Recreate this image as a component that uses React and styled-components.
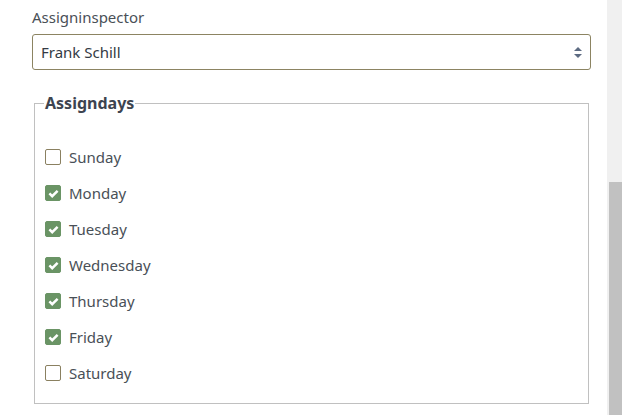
import React from "react";
import styled, { createGlobalStyle } from "styled-components";

const Global = createGlobalStyle`
  html, body { margin: 0; padding: 0; background: #fff; }
  body { font-family: "Noto Sans", "Open Sans", sans-serif; color: #495057; }
  * { box-sizing: border-box; }
`;

const Page = styled.div`
  display: flex;
  height: 415px;
  overflow: hidden;
`;

const Main = styled.div`
  flex: 1;
  padding: 7px 16px 0 32px;
`;

const Track = styled.div`
  width: 15px;
  background: #f0f0f0;
  display: flex;
  flex-direction: column;
  align-items: flex-end;
`;

const Thumb = styled.div`
  margin-top: 182px;
  width: 13px;
  flex: 1;
  background: #c1c1c1;
`;

const Label = styled.div`
  font-size: 15px;
  line-height: 20px;
  color: #495057;
  margin-bottom: 7px;
`;

const Select = styled.div`
  height: 36px;
  border: 1px solid #8c8462;
  border-radius: 3px;
  display: flex;
  align-items: center;
  justify-content: space-between;
  padding: 0 8px 0 8px;
  font-size: 15px;
  color: #333a44;
`;

const Fieldset = styled.fieldset`
  margin: 23px 2px 0;
  border: 1px solid #c0c0c0;
  padding: 0 10px 12px;
`;

const Legend = styled.legend`
  font-size: 16px;
  line-height: 20px;
  font-weight: 700;
  color: #3d4450;
  padding: 0 1px;
  margin-left: -1px;
`;

const List = styled.div`
  margin-top: 26px;
  display: flex;
  flex-direction: column;
`;

const Row = styled.label`
  height: 36px;
  display: flex;
  align-items: center;
  gap: 8px;
  font-size: 15px;
  color: #495057;
`;

const Box = styled.span`
  width: 16px;
  height: 16px;
  border-radius: 2px;
  display: flex;
  align-items: center;
  justify-content: center;
  background: ${(p) => (p.$checked ? "#6a9465" : "#fff")};
  border: 1px solid ${(p) => (p.$checked ? "#6a9465" : "#8a8060")};
`;

const Arrows = () => (
  <svg width="8" height="11" viewBox="0 0 8 11">
    <path d="M4 0 L8 4 H0 Z" fill="#5d6b82" />
    <path d="M4 11 L8 7 H0 Z" fill="#5d6b82" />
  </svg>
);

const Check = () => (
  <svg width="11" height="9" viewBox="0 0 11 9">
    <path d="M1.4 4.4 L4.2 7.2 L9.6 1.8" fill="none" stroke="#fff" strokeWidth="2.5" />
  </svg>
);

const days = [
  ["Sunday", false],
  ["Monday", true],
  ["Tuesday", true],
  ["Wednesday", true],
  ["Thursday", true],
  ["Friday", true],
  ["Saturday", false],
];

export default function App() {
  return (
    <>
      <Global />
      <Page>
        <Main>
          <Label>Assigninspector</Label>
          <Select>
            <span>Frank Schill</span>
            <Arrows />
          </Select>
          <Fieldset>
            <Legend>Assigndays</Legend>
            <List>
              {days.map(([d, c]) => (
                <Row key={d}>
                  <Box $checked={c}>{c && <Check />}</Box>
                  {d}
                </Row>
              ))}
            </List>
          </Fieldset>
        </Main>
        <Track>
          <Thumb />
        </Track>
      </Page>
    </>
  );
}
